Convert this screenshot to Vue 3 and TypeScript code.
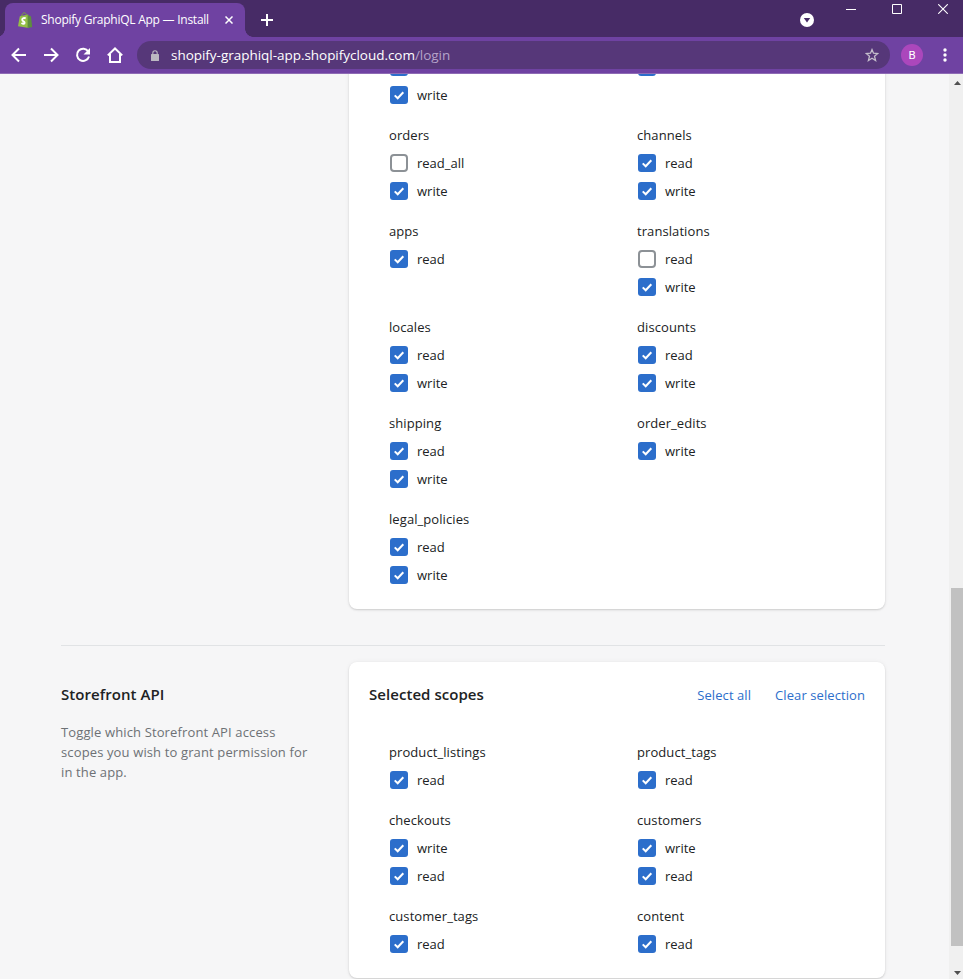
<script setup lang="ts">
import { ref } from 'vue'

interface Scope { label: string; checked: boolean }
interface Group { name: string; scopes: Scope[] }

const on = (label: string): Scope => ({ label, checked: true })
const off = (label: string): Scope => ({ label, checked: false })

const adminGroups = ref<Group[]>([
  { name: '', scopes: [on(''), on('write')] },
  { name: '', scopes: [on('')] },
  { name: 'orders', scopes: [off('read_all'), on('write')] },
  { name: 'channels', scopes: [on('read'), on('write')] },
  { name: 'apps', scopes: [on('read')] },
  { name: 'translations', scopes: [off('read'), on('write')] },
  { name: 'locales', scopes: [on('read'), on('write')] },
  { name: 'discounts', scopes: [on('read'), on('write')] },
  { name: 'shipping', scopes: [on('read'), on('write')] },
  { name: 'order_edits', scopes: [on('write')] },
  { name: 'legal_policies', scopes: [on('read'), on('write')] },
])

const storefrontGroups = ref<Group[]>([
  { name: 'product_listings', scopes: [on('read')] },
  { name: 'product_tags', scopes: [on('read')] },
  { name: 'checkouts', scopes: [on('write'), on('read')] },
  { name: 'customers', scopes: [on('write'), on('read')] },
  { name: 'customer_tags', scopes: [on('read')] },
  { name: 'content', scopes: [on('read')] },
])

function setAll(value: boolean) {
  storefrontGroups.value.forEach(g => g.scopes.forEach(s => (s.checked = value)))
}
</script>

<template>
  <div class="window">
    <header class="tabstrip">
      <div class="tab">
        <svg class="favicon" width="16" height="16" viewBox="0 0 16 16">
          <path d="M2.800 4.200 11.200 2.600 12 16 1 14.200Z" fill="#95bf47" />
          <path d="M10.600 2.700 12.400 4.100 14 4.300 15.200 15.100 10.600 16Z" fill="#5e8e3e" />
          <path d="M4.600 4.300C5 1.900 6.400.6 7.600.8c1.200.2 1.700 1.400 1.700 2.600" fill="none" stroke="#7aa93c" stroke-width="1" />
          <path d="M8.700 6.300C7.200 5.600 5.200 6 5.200 7.700c0 1.700 2.400 1.600 2.400 3.100 0 1.300-1.600 1.400-3.100.3" fill="none" stroke="#fff" stroke-width="1.900" />
        </svg>
        <span class="tab-title">Shopify GraphiQL App — Install</span>
        <svg class="tab-close" width="8" height="8" viewBox="0 0 8 8"><path d="M.5.5l7 7M7.500.5l-7 7" stroke="#fff" stroke-width="1.500" /></svg>
      </div>
      <svg class="new-tab" width="12" height="12" viewBox="0 0 12 12"><path d="M6 0v12M0 6h12" stroke="#fff" stroke-width="2" /></svg>
      <div class="window-controls">
        <svg class="tab-search" width="14" height="14" viewBox="0 0 14 14"><circle cx="7" cy="7" r="7" fill="#fff" /><path d="M3.800 5h6.400L7 9.500z" fill="#472b66" /></svg>
        <svg class="minimize" width="10" height="10" viewBox="0 0 10 10"><path d="M0 5.500h10" stroke="#fff" /></svg>
        <svg class="maximize" width="10" height="10" viewBox="0 0 10 10"><path d="M.5.5h9v9h-9z" fill="none" stroke="#fff" /></svg>
        <svg class="close" width="10" height="10" viewBox="0 0 10 10"><path d="M.2.2l9.600 9.600M9.800.2L.2 9.800" stroke="#fff" stroke-width="1.100" /></svg>
      </div>
    </header>

    <div class="toolbar">
      <nav class="nav">
        <svg width="16" height="16" viewBox="0 0 16 16"><path d="M15 8H2M8 1.500 1.500 8 8 14.500" /></svg>
        <svg width="16" height="16" viewBox="0 0 16 16"><path d="M1 8h13M8 1.500 14.500 8 8 14.500" /></svg>
        <svg width="16" height="16" viewBox="0 0 16 16"><path d="M13.300 4.500A6.100 6.100 0 1 0 14 9.500" /><path class="solid" d="M15 1v6.500H8.500z" /></svg>
        <svg width="16" height="16" viewBox="0 0 16 16"><path d="M.8 8.400 8 1.500l7.200 6.900M3 7v8h10V7" /></svg>
      </nav>
      <div class="address">
        <svg class="lock" width="8" height="11" viewBox="0 0 8 11"><rect y="4" width="8" height="7" rx=".6" fill="#bcb8c2" /><path d="M1.800 4.500V3a2.200 2.200 0 0 1 4.400 0v1.500" fill="none" stroke="#bcb8c2" stroke-width="1.100" /></svg>
        <span class="url">shopify-graphiql-app.shopifycloud.com<span class="path">/login</span></span>
        <svg class="star" width="14" height="14" viewBox="0 0 14 14"><path d="M7 1.600 8.500 5.200l4.300.3-3.300 2.700 1.100 4.300L7 10.200 3.400 12.500l1.100-4.300L1.200 5.500l4.300-.3z" fill="none" stroke="#c4bdcb" stroke-width="1.300" /></svg>
      </div>
      <div class="avatar">B</div>
      <svg class="kebab" width="4" height="14" viewBox="0 0 4 14"><circle cx="2" cy="2" r="1.700" /><circle cx="2" cy="7" r="1.700" /><circle cx="2" cy="12" r="1.700" /></svg>
    </div>

    <div class="viewport">
      <main class="page">
        <section class="card admin-card">
          <div class="groups">
            <div v-for="(group, i) in adminGroups" :key="i" class="group">
              <div v-if="group.name" class="group-name">{{ group.name }}</div>
              <label v-for="scope in group.scopes" :key="scope.label" class="scope" @click="scope.checked = !scope.checked">
                <span class="box" :class="{ checked: scope.checked }">
                  <svg v-if="scope.checked" width="18" height="18" viewBox="0 0 18 18"><path d="M4.700 9.400 7.700 12.300 13.300 6.200" /></svg>
                </span>
                <span v-if="scope.label">{{ scope.label }}</span>
              </label>
            </div>
          </div>
        </section>

        <section class="storefront">
          <div class="annotation">
            <h2>Storefront API</h2>
            <p>Toggle which Storefront API access<br>scopes you wish to grant permission for<br>in the app.</p>
          </div>
          <div class="card">
            <div class="card-header">
              <h2>Selected scopes</h2>
              <button type="button" class="select-all" @click="setAll(true)">Select all</button>
              <button type="button" class="clear" @click="setAll(false)">Clear selection</button>
            </div>
            <div class="groups">
              <div v-for="group in storefrontGroups" :key="group.name" class="group">
                <div class="group-name">{{ group.name }}</div>
                <label v-for="scope in group.scopes" :key="scope.label" class="scope" @click="scope.checked = !scope.checked">
                  <span class="box" :class="{ checked: scope.checked }">
                    <svg v-if="scope.checked" width="18" height="18" viewBox="0 0 18 18"><path d="M4.700 9.400 7.700 12.300 13.300 6.200" /></svg>
                  </span>
                  <span>{{ scope.label }}</span>
                </label>
              </div>
            </div>
          </div>
        </section>
      </main>
      <aside class="scrollbar">
        <svg width="7" height="4" viewBox="0 0 7 4"><path d="M0 4 3.500 0 7 4z" /></svg>
        <div class="thumb"></div>
        <svg width="7" height="4" viewBox="0 0 7 4"><path d="M0 0h7L3.500 4z" /></svg>
      </aside>
    </div>
  </div>
</template>

<style>
body { margin: 0; overflow: hidden; }
</style>

<style scoped>
.window {
  width: 963px;
  height: 979px;
  display: flex;
  flex-direction: column;
  overflow: hidden;
  font-family: "Open Sans", "Noto Sans", sans-serif;
  font-size: 13px;
  line-height: 20px;
  color: #202223;
}
svg { display: block; flex: none; }

.tabstrip {
  height: 37px;
  flex: none;
  display: flex;
  background: #472b66;
}
.tab {
  box-sizing: border-box;
  width: 240px;
  height: 34px;
  margin: 3px 0 0 5px;
  padding: 0 12px;
  display: flex;
  align-items: center;
  border-radius: 8px 8px 0 0;
  background: #6f42a2;
  color: #fff;
  position: relative;
}
.tab::before, .tab::after {
  content: "";
  position: absolute;
  bottom: 0;
  width: 8px;
  height: 8px;
}
.tab::before { left: -8px; background: radial-gradient(circle at 0 0, #472b66 7.5px, #6f42a2 8px); }
.tab::after { right: -8px; background: radial-gradient(circle at 100% 0, #472b66 7.5px, #6f42a2 8px); }
.tab-title { flex: 1; margin-left: 8px; font-size: 12px; letter-spacing: -0.25px; white-space: nowrap; }
.new-tab { margin: 14px 0 0 16px; }
.window-controls { margin-left: auto; display: flex; align-items: flex-start; padding-right: 15px; }
.tab-search { margin: 13px 32px 0 0; }
.minimize { margin: 4px 36px 0 0; }
.maximize { margin: 4px 36px 0 0; }
.close { margin-top: 4px; }

.toolbar {
  box-sizing: border-box;
  height: 37px;
  flex: none;
  display: flex;
  align-items: center;
  padding: 0 15px 0 11px;
  background: #6f42a2;
  border-bottom: 1px solid #8e6bb5;
}
.nav { display: flex; gap: 16px; }
.nav path { fill: none; stroke: #fff; stroke-width: 2; }
.nav .solid { fill: #fff; stroke: none; }
.address {
  flex: 1;
  height: 28px;
  margin-left: 14px;
  padding: 0 11px 0 14px;
  display: flex;
  align-items: center;
  border-radius: 14px;
  background: #563779;
}
.url { flex: 1; margin-left: 12px; color: #fff; font-size: 13.5px; letter-spacing: -0.03px; }
.path { color: #b5a3c9; }
.avatar {
  width: 22px;
  height: 22px;
  margin: 0 20px 0 11px;
  border-radius: 50%;
  background: #ab47bc;
  color: #fff;
  font: 11.5px/22px Roboto, sans-serif;
  text-align: center;
}
.kebab { fill: #fff; margin-right: 1px; }

.viewport { flex: 1; min-height: 0; display: flex; background: #f6f6f7; overflow: hidden; }
.page { flex: 1; padding-left: 61px; display: flex; flex-direction: column; }
.card {
  width: 536px;
  box-sizing: border-box;
  padding: 0 20px 20px;
  background: #fff;
  border-radius: 8px;
  box-shadow: 0 0 5px rgba(23, 24, 24, 0.05), 0 1px 2px rgba(0, 0, 0, 0.15);
}
.admin-card { margin: -21px 0 0 288px; flex: none; }
.groups { display: grid; grid-template-columns: 248px 248px; row-gap: 12px; padding-left: 20px; }
.group-name, .scope { height: 28px; line-height: 28px; display: flex; align-items: center; }
.group-name { letter-spacing: 0.08px; }
.box {
  box-sizing: border-box;
  width: 18px;
  height: 18px;
  margin: 0 9px 0 1px;
  border: 2px solid #8c9196;
  border-radius: 4px;
  background: #fff;
}
.box.checked { border: 0; border-radius: 3px; background: #2c6ecb; }
.box path { fill: none; stroke: #fff; stroke-width: 2; }

.storefront {
  width: 824px;
  box-sizing: border-box;
  margin-top: 36px;
  padding-top: 16px;
  border-top: 1px solid #e1e3e5;
  display: flex;
  justify-content: space-between;
}
h2 { margin: 0; font-size: 15px; line-height: 24px; font-weight: 600; letter-spacing: 0.05px; }
.annotation { width: 288px; padding-top: 20px; }
.annotation p { margin: 16px 0 0; color: #6d7175; letter-spacing: 0.13px; white-space: nowrap; }
.card-header { display: flex; height: 56px; padding-top: 20px; }
.card-header h2 { flex: 1; }
button { padding: 0; border: 0; background: none; color: #2c6ecb; font: inherit; height: 26px; letter-spacing: 0.08px; }
.clear { margin-left: 24px; }

.scrollbar {
  width: 14px;
  flex: none;
  box-sizing: border-box;
  padding: 7px 0 4px 2px;
  display: flex;
  flex-direction: column;
  background: #f0f0f0;
}
.scrollbar svg { margin-left: 3px; fill: #505050; }
.thumb { height: 358px; margin: auto 0 25px; background: #c1c1c1; }
</style>
